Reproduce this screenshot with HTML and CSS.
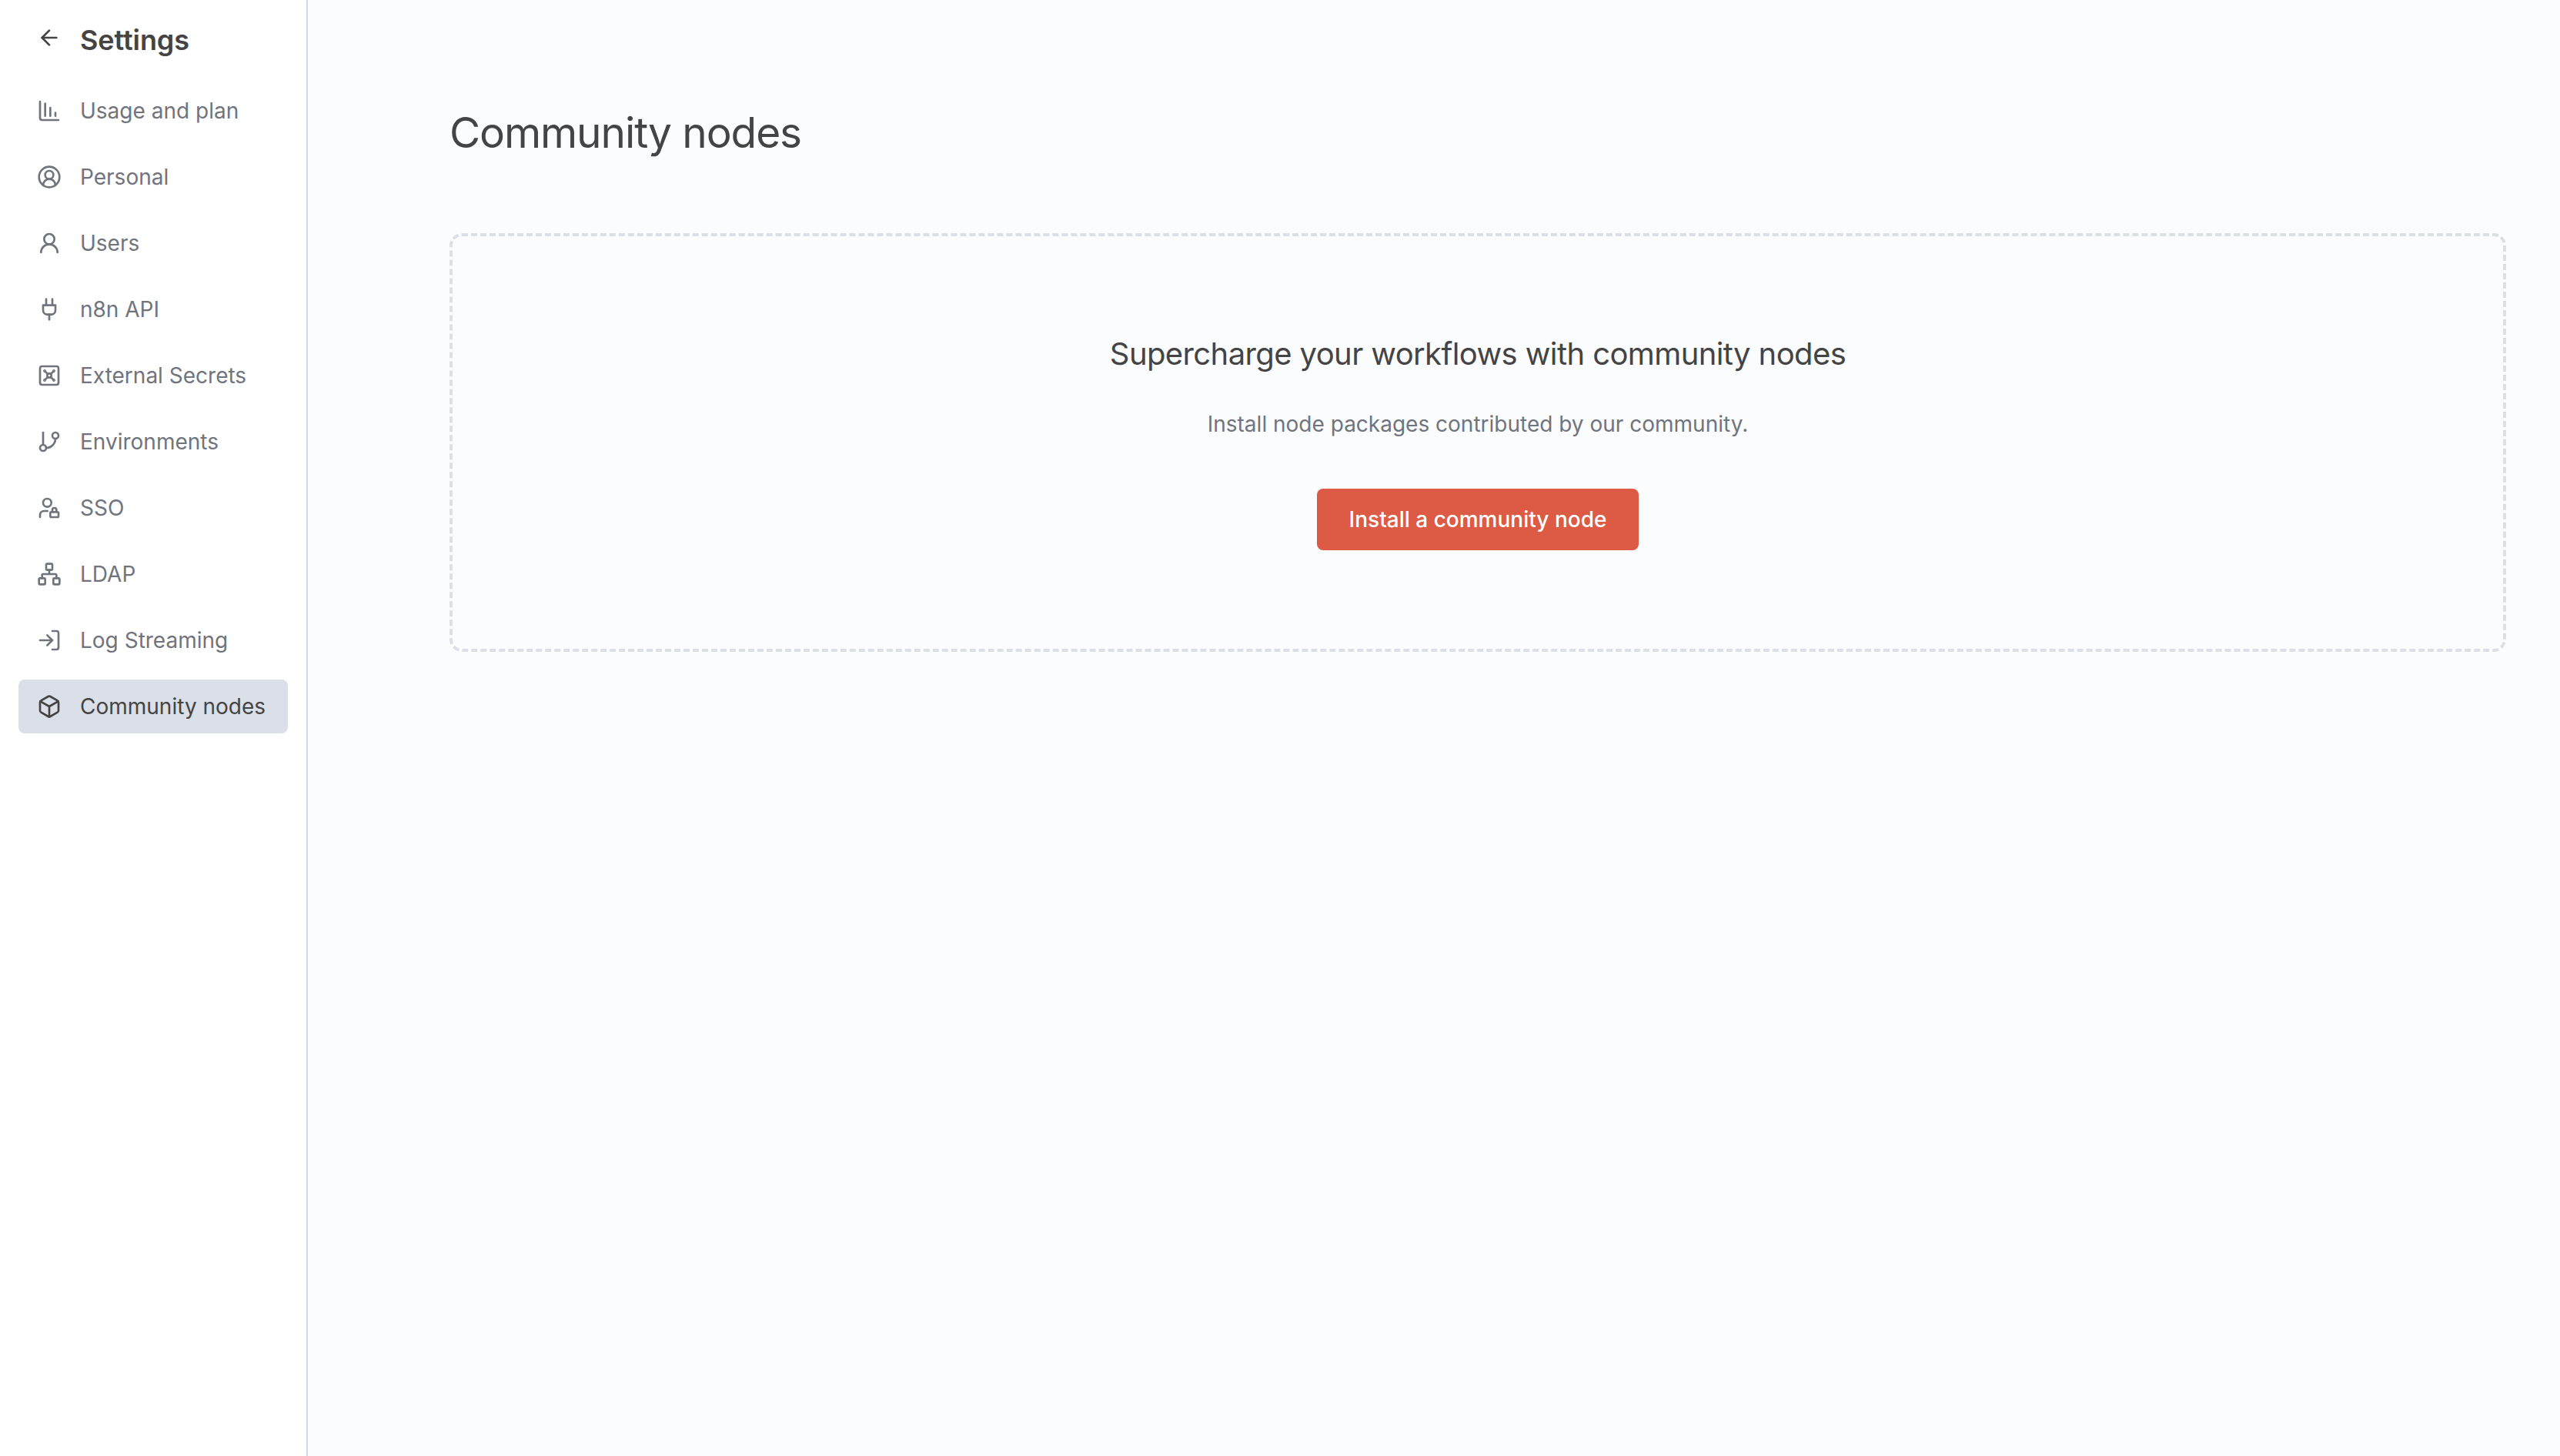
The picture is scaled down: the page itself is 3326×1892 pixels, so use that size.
FILE: index.html
```html
<!DOCTYPE html>
<html lang="en">
<head>
    <meta charset="UTF-8">
    <meta name="viewport" content="width=device-width, initial-scale=1.0">
    <title>Community nodes</title>
    <link rel="stylesheet" href="styles.css">
</head>
<body>
    <div class="app">
        <aside class="sidebar">
            <div class="side-head">
                <svg class="icon back" viewBox="0 0 24 24"><path d="m12 19-7-7 7-7"/><path d="M19 12H5"/></svg>
                <span class="side-title">Settings</span>
            </div>
            <nav class="nav">
                <a class="nav-item">
                    <svg class="icon" viewBox="0 0 24 24"><path d="M13 17V9"/><path d="M18 17v-3"/><path d="M3 3v16a2 2 0 0 0 2 2h16"/><path d="M8 17V5"/></svg>
                    Usage and plan
                </a>
                <a class="nav-item">
                    <svg class="icon" viewBox="0 0 24 24"><path d="M18 20a6 6 0 0 0-12 0"/><circle cx="12" cy="10" r="4"/><circle cx="12" cy="12" r="10"/></svg>
                    Personal
                </a>
                <a class="nav-item">
                    <svg class="icon" viewBox="0 0 24 24"><circle cx="12" cy="8" r="5"/><path d="M20 21a8 8 0 0 0-16 0"/></svg>
                    Users
                </a>
                <a class="nav-item">
                    <svg class="icon" viewBox="0 0 24 24"><path d="M12 22v-5"/><path d="M9 8V2"/><path d="M15 8V2"/><path d="M18 8v5a4 4 0 0 1-4 4h-4a4 4 0 0 1-4-4V8Z"/></svg>
                    n8n API
                </a>
                <a class="nav-item">
                    <svg class="icon" viewBox="0 0 24 24"><rect width="18" height="18" x="3" y="3" rx="2"/><circle cx="7.5" cy="7.5" r=".5"/><path d="m7.9 7.9 2.7 2.7"/><circle cx="16.5" cy="7.5" r=".5"/><path d="m13.4 10.6 2.7-2.7"/><circle cx="7.5" cy="16.5" r=".5"/><path d="m7.9 16.1 2.7-2.7"/><circle cx="16.5" cy="16.5" r=".5"/><path d="m13.4 13.4 2.7 2.7"/><circle cx="12" cy="12" r="2"/></svg>
                    External Secrets
                </a>
                <a class="nav-item">
                    <svg class="icon" viewBox="0 0 24 24"><path d="M6 3v12"/><circle cx="18" cy="6" r="3"/><circle cx="6" cy="18" r="3"/><path d="M18 9a9 9 0 0 1-9 9"/></svg>
                    Environments
                </a>
                <a class="nav-item">
                    <svg class="icon" viewBox="0 0 24 24"><circle cx="10" cy="7" r="4"/><path d="M10.3 15H7a4 4 0 0 0-4 4v2"/><path d="M15 15.5V14a2 2 0 0 1 4 0v1.5"/><rect width="8" height="5" x="13" y="16" rx=".9"/></svg>
                    SSO
                </a>
                <a class="nav-item">
                    <svg class="icon" viewBox="0 0 24 24"><rect x="16" y="16" width="6" height="6" rx="1"/><rect x="2" y="16" width="6" height="6" rx="1"/><rect x="9" y="2" width="6" height="6" rx="1"/><path d="M5 16v-3a1 1 0 0 1 1-1h12a1 1 0 0 1 1 1v3"/><path d="M12 12V8"/></svg>
                    LDAP
                </a>
                <a class="nav-item">
                    <svg class="icon" viewBox="0 0 24 24"><path d="m10 17 5-5-5-5"/><path d="M15 12H3"/><path d="M15 3h4a2 2 0 0 1 2 2v14a2 2 0 0 1-2 2h-4"/></svg>
                    Log Streaming
                </a>
                <a class="nav-item active">
                    <svg class="icon" viewBox="0 0 24 24"><path d="M21 8a2 2 0 0 0-1-1.73l-7-4a2 2 0 0 0-2 0l-7 4A2 2 0 0 0 3 8v8a2 2 0 0 0 1 1.73l7 4a2 2 0 0 0 2 0l7-4A2 2 0 0 0 21 16Z"/><path d="m3.3 7 8.7 5 8.7-5"/><path d="M12 22V12"/></svg>
                    Community nodes
                </a>
            </nav>
        </aside>

        <main class="main">
            <h1 class="page-title">Community nodes</h1>
            <section class="empty">
                <h2 class="empty-title">Supercharge your workflows with community nodes</h2>
                <p class="empty-text">Install node packages contributed by our community.</p>
                <button class="btn">Install a community node</button>
            </section>
        </main>
    </div>
</body>
</html>
```

FILE: styles.css
```css
* {
    margin: 0;
    padding: 0;
    box-sizing: border-box;
}

html, body {
    height: 100%;
}

body {
    background-color: #fbfcfe;
    font-family: Inter, "Liberation Sans", sans-serif;
    color: #444;
}

.app {
    display: flex;
    height: 100%;
}

.icon {
    width: 32px;
    height: 32px;
    flex-shrink: 0;
    fill: none;
    stroke: currentColor;
    stroke-width: 2;
    stroke-linecap: round;
    stroke-linejoin: round;
}

.sidebar {
    width: 400px;
    flex-shrink: 0;
    background-color: #fff;
    border-right: 2px solid #d0d6e4;
    padding: 0 24px;
}

.side-head {
    height: 109px;
    display: flex;
    align-items: center;
    gap: 24px;
    padding: 0 0 6px 24px;
}

.back {
    margin-bottom: 6px;
}

.side-title {
    font-size: 36px;
    font-weight: 600;
    letter-spacing: -0.1px;
    color: #444;
}

.nav {
    display: flex;
    flex-direction: column;
    gap: 16px;
}

.nav-item {
    height: 70px;
    display: flex;
    align-items: center;
    gap: 24px;
    padding-left: 24px;
    border-radius: 8px;
    font-size: 28px;
    color: #70747c;
}

.nav-item.active {
    background-color: #dbdfe7;
    color: #444;
}

.main {
    flex: 1;
    padding: 0 70px 0 184px;
}

.page-title {
    height: 303px;
    padding-top: 137px;
    font-size: 55px;
    font-weight: 400;
    letter-spacing: -1.1px;
    line-height: 70px;
    color: #444;
}

.empty {
    height: 544px;
    border: 4px dashed #dbdfe7;
    border-radius: 16px;
    display: flex;
    flex-direction: column;
    align-items: center;
    padding-top: 128px;
}

.empty-title {
    font-size: 40px;
    font-weight: 400;
    letter-spacing: -0.6px;
    line-height: 50px;
    color: #444;
}

.empty-text {
    margin-top: 46px;
    font-size: 28px;
    line-height: 40px;
    color: #70747c;
}

.btn {
    margin-top: 64px;
    width: 418px;
    height: 80px;
    background-color: #dd5a44;
    border: none;
    border-radius: 8px;
    color: #fff;
    font-family: inherit;
    font-size: 28px;
    font-weight: 500;
}
```
